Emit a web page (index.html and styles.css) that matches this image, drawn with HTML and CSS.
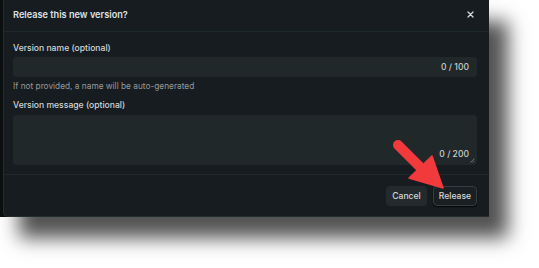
FILE: index.html
```html
<!DOCTYPE html>
<html>
<head>
<meta charset="utf-8">
<link rel="stylesheet" href="styles.css">
</head>
<body>
<div class="shot">
  <div class="dialog">
    <div class="header">
      <span class="title">Release this new version?</span>
      <svg class="close" width="7" height="7" viewBox="0 0 7 7"><path d="M1 1L6 6M6 1L1 6" stroke="#d6d9db" stroke-width="1.3" stroke-linecap="round"/></svg>
    </div>
    <div class="body">
      <label class="label">Version name (optional)</label>
      <div class="field input-field">
        <input class="input" type="text">
        <span class="count">0 / 100</span>
      </div>
      <div class="help">If not provided, a name will be auto-generated</div>
      <label class="label label-2">Version message (optional)</label>
      <div class="field area-field">
        <textarea class="area"></textarea>
        <span class="count">0 / 200</span>
        <svg class="grip" width="5" height="5" viewBox="0 0 5 5"><path d="M4.5 0.5L0.5 4.5M4.5 2.8L2.8 4.5" stroke="#7d8487" stroke-width="0.8"/></svg>
      </div>
    </div>
    <div class="footer">
      <button class="btn cancel">Cancel</button>
      <button class="btn release">Release</button>
    </div>
  </div>
  <svg class="arrow" width="62" height="56" viewBox="0 0 62 56">
    <path d="M8 5L30 27" stroke="#f23a3c" stroke-width="10" stroke-linecap="round"/>
    <path d="M19 38L42 16L53 48Z" fill="#f23a3c" stroke="#f23a3c" stroke-width="1.5" stroke-linejoin="round"/>
  </svg>
</div>
</body>
</html>
```
FILE: styles.css
```css
html, body {
  margin: 0;
  padding: 0;
  background: #ffffff;
}
body {
  width: 539px;
  height: 268px;
  font-family: "Inter", "Liberation Sans", sans-serif;
  color: #d6d9db;
}
.shot {
  position: relative;
  width: 489px;
  height: 217px;
  display: flex;
  background: #0b0f10;
  padding-left: 3px;
  box-sizing: border-box;
  box-shadow: 19px 21px 18px rgba(0, 0, 0, 0.68);
}
.dialog {
  flex: 1;
  display: flex;
  flex-direction: column;
  background: #161c1f;
  border-left: 1px solid #242c2f;
  border-bottom: 1px solid #242c2f;
  border-bottom-left-radius: 5px;
}
.header {
  height: 32px;
  flex-shrink: 0;
  border-bottom: 1px solid #1e292c;
  display: flex;
  align-items: center;
  justify-content: space-between;
  padding: 0 15px 3px 9px;
  box-sizing: border-box;
}
.title {
  font-size: 9.2px;
  font-weight: 600;
  color: #dfe2e4;
}
.close {
  display: block;
}
.body {
  display: flex;
  flex-direction: column;
  padding: 11px 12px 9px 9px;
  border-bottom: 1px solid #1e292c;
}
.label {
  font-size: 8.6px;
  font-weight: 500;
  line-height: 11px;
  color: #d3d7d9;
}
.label-2 {
  margin-top: 8px;
}
.field {
  background: #212829;
  border-radius: 4px;
  display: flex;
  box-sizing: border-box;
}
.input-field {
  margin-top: 3px;
  height: 20px;
  align-items: center;
  padding: 0 8px;
}
.area-field {
  position: relative;
  margin-top: 4px;
  height: 50px;
  align-items: flex-end;
  padding: 0 8px 5px;
}
.input, .area {
  flex: 1;
  background: transparent;
  border: 0;
  outline: none;
  padding: 0;
  margin: 0;
  min-width: 0;
  resize: none;
  font: inherit;
  color: #d6d9db;
}
.area {
  align-self: stretch;
}
.count {
  font-size: 8.6px;
  font-weight: 500;
  color: #c9cdcf;
  line-height: 11px;
}
.grip {
  position: absolute;
  right: 2px;
  bottom: 2px;
}
.help {
  margin-top: 4px;
  font-size: 8.3px;
  line-height: 11px;
  color: #959b9e;
}
.footer {
  flex: 1;
  display: flex;
  align-items: center;
  justify-content: flex-end;
  gap: 6px;
  padding: 0 12px 0 0;
}
.btn {
  font-family: inherit;
  font-size: 8.6px;
  font-weight: 500;
  height: 20px;
  border-radius: 4px;
  padding: 0;
  color: #d6d9db;
  cursor: pointer;
}
.cancel {
  width: 41px;
  background: #222a2c;
  border: 0;
}
.release {
  width: 44px;
  background: #1a2022;
  border: 1px solid #353d40;
  box-shadow: 0 1px 1px #050708;
}
.arrow {
  position: absolute;
  left: 390px;
  top: 140px;
}
```
